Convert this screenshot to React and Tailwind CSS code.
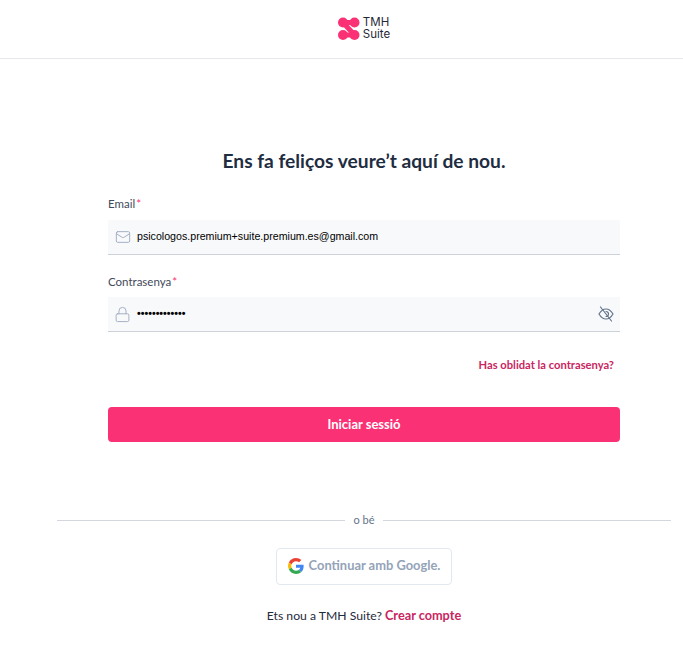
import React from 'react'
import { Mail, Lock } from 'lucide-react'

const font = "font-['Lato','Noto_Sans',sans-serif]"

function Logo() {
  return (
    <div className="flex items-center gap-[3px]">
      <svg width="22" height="24" viewBox="0 0 22 24" fill="#fb3176" stroke="none">
        <circle cx="5" cy="5.500" r="5" />
        <circle cx="16.500" cy="5.500" r="5" />
        <circle cx="5" cy="18" r="5" />
        <circle cx="16.500" cy="18" r="5" />
        <path d="M5 3 H16.500 V8 H5 Z M5 15.500 H16.500 V20.500 H5 Z" />
        <path d="M5 5.500 L16.500 18" stroke="#fb3176" strokeWidth="5" />
      </svg>
      <div className="mb-[2px] text-[11.5px] leading-[12px] text-[#1f2937] font-['Inter',sans-serif]">
        <div>TMH</div>
        <div>Suite</div>
      </div>
    </div>
  )
}

function EyeSlash() {
  return (
    <svg width="16" height="16" viewBox="0 0 16 16" fill="none" stroke="#64748b" strokeWidth="1.2" strokeLinecap="round">
      <path d="M1 8 C3 4.600 5.600 3 8 3 C10.400 3 13 4.600 15 8 C13 11.400 10.400 13 8 13 C5.600 13 3 11.400 1 8 Z" />
      <path d="M8 5.500 A2.500 2.500 0 0 1 10.500 8 A2.500 2.500 0 0 1 8 10.500" />
      <path d="M2.500 1 L13.500 15" />
    </svg>
  )
}

function Field({ label, labelGap, icon, value, right, dots }) {
  return (
    <div>
      <label className={`block text-[11.5px] leading-[14px] text-[#3f4a5a] ${labelGap}`}>
        {label}
        <span className="text-[#fb3176] ml-px">*</span>
      </label>
      <div className="h-[35px] bg-[#f8f9fb] border-b border-[#cdd2da] flex items-center pl-[7px] pr-[6px]">
        {icon}
        <span className={`ml-[6px] flex-1 text-black text-[10.65px] font-['Liberation_Sans',sans-serif] ${dots ? 'font-bold' : ''}`}>
          {value}
        </span>
        {right}
      </div>
    </div>
  )
}

function GoogleIcon() {
  return (
    <svg width="16" height="16" viewBox="0 0 48 48">
      <path fill="#EA4335" d="M24 9.5c3.5 0 6.7 1.2 9.2 3.6l6.9-6.9C35.900 2.400 30.500 0 24 0 14.600 0 6.500 5.400 2.600 13.200l8 6.200C12.500 13.700 17.800 9.500 24 9.500z" />
      <path fill="#4285F4" d="M46.900 24.500c0-1.600-.1-3.100-.4-4.500H24v9h12.900c-.6 3-2.200 5.500-4.800 7.200l7.700 6c4.500-4.200 7.100-10.300 7.100-17.700z" />
      <path fill="#FBBC05" d="M10.500 28.600c-.5-1.400-.8-3-.8-4.600s.3-3.200.8-4.600l-8-6.200C.9 16.500 0 20.100 0 24s.9 7.500 2.600 10.800l7.900-6.200z" />
      <path fill="#34A853" d="M24 48c6.500 0 11.900-2.100 15.900-5.800l-7.700-6c-2.200 1.400-4.900 2.300-8.200 2.300-6.200 0-11.500-4.200-13.400-9.900l-8 6.200C6.500 42.600 14.600 48 24 48z" />
    </svg>
  )
}

export default function App() {
  return (
    <div className={`min-h-[651px] bg-white ${font}`}>
      <header className="h-[59px] border-b border-[#e5e7eb] pl-[45px] flex items-center justify-center">
        <Logo />
      </header>

      <main className="pl-[45px]">
        <div className="px-[12px]">
          <div className="mx-[51px]">
            <h1 className="mt-[89px] text-center text-[19.2px] leading-[26px] font-bold text-[#1f2d42]">
              Ens fa feliços veure’t aquí de nou.
            </h1>

            <div className="mt-[23px] flex flex-col gap-[20px]">
              <Field
                label="Email"
                labelGap="mb-[9px]"
                value="psicologos.premium+suite.premium.es@gmail.com"
                icon={<Mail size={16} strokeWidth={1.5} className="text-[#a5b0c4]" />}
              />
              <Field
                label="Contrasenya"
                labelGap="mb-[8px]"
                value="•••••••••••••"
                dots
                icon={<Lock size={17} strokeWidth={1.4} className="-ml-px text-[#a5b0c4]" />}
                right={<EyeSlash />}
              />
            </div>

            <div className="mt-[26px] pr-[6px] text-right text-[11.2px] leading-[14px] font-bold text-[#c9255f]">
              Has oblidat la contrasenya?
            </div>

            <button className="mt-[35px] w-full h-[35px] rounded-[4px] bg-[#fb3176] text-white text-[13px] font-bold">
              Iniciar sessió
            </button>
          </div>

          <div className="mt-[70px] flex items-center gap-[8px] text-[11px] text-[#64748b]">
            <div className="flex-1 h-px bg-[#d4d8de]" />
            <span>o bé</span>
            <div className="flex-1 h-px bg-[#d4d8de]" />
          </div>

          <div className="mt-[19px] flex justify-center">
            <button className="h-[37px] w-[176px] rounded-[4px] border border-[#e2e8f0] bg-white flex items-center justify-center gap-[5px] text-[12.9px] font-bold text-[#94a3b8]">
              <GoogleIcon />
              Continuar amb Google.
            </button>
          </div>

          <p className="mt-[21px] text-center text-[12.2px] leading-[18px] text-[#1f2a3c]">
            Ets nou a TMH Suite? <span className="text-[12.7px] font-bold text-[#c9255f]">Crear compte</span>
          </p>
        </div>
      </main>
    </div>
  )
}
